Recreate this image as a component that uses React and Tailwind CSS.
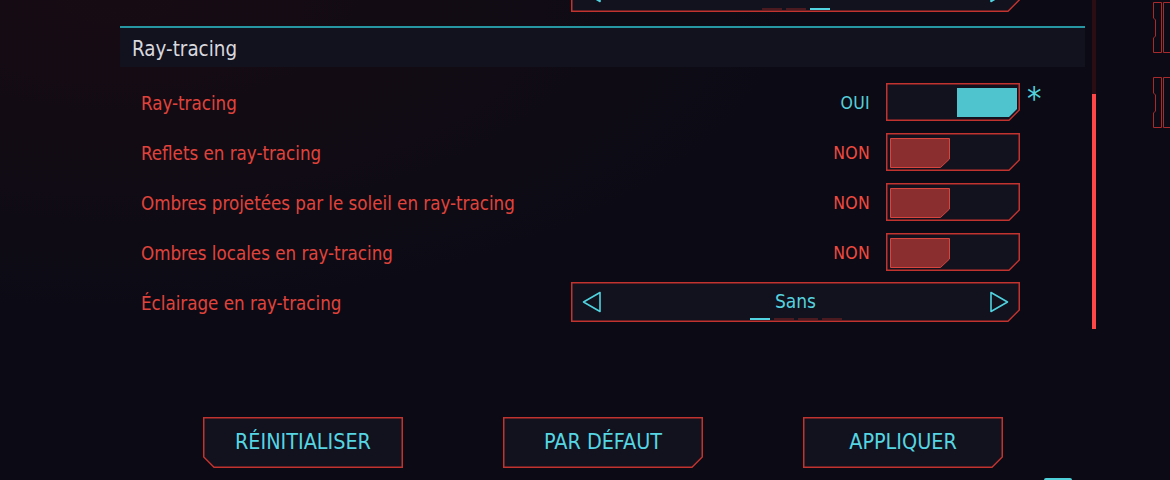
import React from 'react';

function Frame({ w, h, cut = 11, corner = 'br', stroke = '#c2322e', fill = '#12111e', className = '', children }) {
  const a = 0.75;
  const points =
    corner === 'bl'
      ? `${a},${a} ${w - a},${a} ${w - a},${h - a} ${cut},${h - a} ${a},${h - cut}`
      : `${a},${a} ${w - a},${a} ${w - a},${h - cut} ${w - cut},${h - a} ${a},${h - a}`;

  return (
    <div className={`grid shrink-0 ${className}`}>
      <svg className="col-start-1 row-start-1" width={w} height={h}>
        <polygon points={points} fill={fill} stroke={stroke} strokeWidth="1.5" />
      </svg>
      <div className="col-start-1 row-start-1 flex min-w-0">{children}</div>
    </div>
  );
}

function Knob({ on }) {
  if (on) {
    return (
      <svg width="60" height="29">
        <polygon points="0,0 60,0 60,21 52,29 0,29" fill="#4fc4ce" />
      </svg>
    );
  }
  return (
    <svg width="60" height="30">
      <polygon points="0.5,0.5 59.5,0.5 59.5,21 50.5,29.5 0.5,29.5" fill="#8a2e2f" stroke="#d8453e" strokeWidth="1" />
    </svg>
  );
}

function Toggle({ on }) {
  return (
    <div className="flex items-center">
      <span
        className={`mr-[16px] pt-[2px] text-[17.5px] tracking-[0.3px] ${on ? 'text-[#56cfdb]' : 'text-[#f04a40]'}`}
      >
        {on ? 'OUI' : 'NON'}
      </span>
      <Frame w={134} h={38} className="w-[134px] h-[38px]">
        <div className={`flex w-full pt-[5px] ${on ? 'justify-end pr-[3px]' : 'pl-[4px]'}`}>
          <Knob on={on} />
        </div>
      </Frame>
    </div>
  );
}

function Arrow({ dir }) {
  return (
    <svg width="20" height="22" viewBox="0 0 20 22">
      {dir === 'left' ? (
        <polygon points="1.5,11 18,1.5 18,20.5" fill="none" stroke="#4fd2de" strokeWidth="1.6" strokeLinejoin="round" />
      ) : (
        <polygon points="18.5,11 2,1.5 2,20.5" fill="none" stroke="#4fd2de" strokeWidth="1.6" strokeLinejoin="round" />
      )}
    </svg>
  );
}

function Selector({ value, active, className = '' }) {
  return (
    <Frame w={449} h={40} cut={12} className={`w-[449px] h-[40px] ${className}`}>
      <div className="flex w-full items-center justify-between px-[11px]">
        <Arrow dir="left" />
        <div className="flex flex-col items-center pt-[6px]">
          <span className="h-[22px] text-[19px] leading-[22px] text-[#56d2de]">{value}</span>
          <div className="mt-[6px] flex gap-[4px]">
            {[0, 1, 2, 3].map((i) =>
              value || i < 3 ? (
                <span
                  key={i}
                  className={`h-[2px] w-[20px] ${i === active ? 'bg-[#52d4e2]' : 'bg-[#4a1a20]'}`}
                />
              ) : null
            )}
          </div>
        </div>
        <Arrow dir="right" />
      </div>
    </Frame>
  );
}

function Row({ label, children, mark }) {
  return (
    <div className="flex h-[50px] items-center pl-[21px]">
      <span className="flex-1 pt-[3px] text-[18.6px] text-[#e0433b]">{label}</span>
      {children}
      <div className="flex h-full w-[65px] pl-[7px] pt-[5px]">
        {mark && <span className="text-[32px] leading-[32px] text-[#52d0dc]">*</span>}
      </div>
    </div>
  );
}

function Button({ label, corner }) {
  return (
    <Frame w={200} h={51} cut={11} corner={corner} className="w-[200px] h-[51px]">
      <span className="flex w-full items-center justify-center pb-[1px] text-[21.4px] text-[#55d6e2]">
        {label}
      </span>
    </Frame>
  );
}

function SideTab() {
  return (
    <svg width="17" height="51">
      <polygon
        points="0.5,0.5 8.5,0.5 8.5,50.5 0.5,50.5 0.5,36 2.5,34 2.5,18 0.5,16"
        fill="none"
        stroke="#a82a2c"
        strokeWidth="1"
      />
      <polyline points="17,0.5 10.5,0.5 10.5,50.5 17,50.5" fill="none" stroke="#a82a2c" strokeWidth="1" />
    </svg>
  );
}

export default function App() {
  return (
    <div className="relative flex h-[480px] w-[1170px] overflow-hidden bg-[#0c0b15] bg-[radial-gradient(ellipse_at_10%_0%,#170b13_0%,#0c0b15_45%)] font-['DejaVu_Sans_Condensed','DejaVu_Sans',sans-serif]">
      <div className="w-[120px] shrink-0" />

      <div className="flex w-[965px] shrink-0 flex-col">
        <div className="-mt-[28px] flex justify-end pr-[65px]">
          <Selector value="" active={2} />
        </div>

        <div className="mt-[14px] h-[41px] border-t-2 border-[#2596a2] bg-[#12111e] pl-[12px]">
          <span className="block pt-[6px] text-[20.4px] text-[#d8d8de]">Ray-tracing</span>
        </div>

        <div className="mt-[10px] flex flex-col">
          <Row label="Ray-tracing" mark>
            <Toggle on />
          </Row>
          <Row label="Reflets en ray-tracing">
            <Toggle />
          </Row>
          <Row label="Ombres projetées par le soleil en ray-tracing">
            <Toggle />
          </Row>
          <Row label="Ombres locales en ray-tracing">
            <Toggle />
          </Row>
          <Row label="Éclairage en ray-tracing">
            <Selector value="Sans" active={0} />
          </Row>
        </div>

        <div className="mt-[90px] flex gap-[100px] pl-[83px]">
          <Button label="RÉINITIALISER" corner="bl" />
          <Button label="PAR DÉFAUT" corner="br" />
          <Button label="APPLIQUER" corner="br" />
        </div>
      </div>

      <div className="ml-[7px] flex w-[4px] shrink-0 flex-col">
        <div className="h-[94px] bg-[#2a0e13]" />
        <div className="h-[235px] bg-[#ff4747]" />
      </div>

      <div className="ml-[57px] flex flex-col gap-[24px] pt-[2px]">
        <SideTab />
        <SideTab />
      </div>

      <div className="absolute bottom-0 left-[1044px] h-[2px] w-[28px] rounded-t-[2px] bg-[#4fd0d8]" />
    </div>
  );
}
